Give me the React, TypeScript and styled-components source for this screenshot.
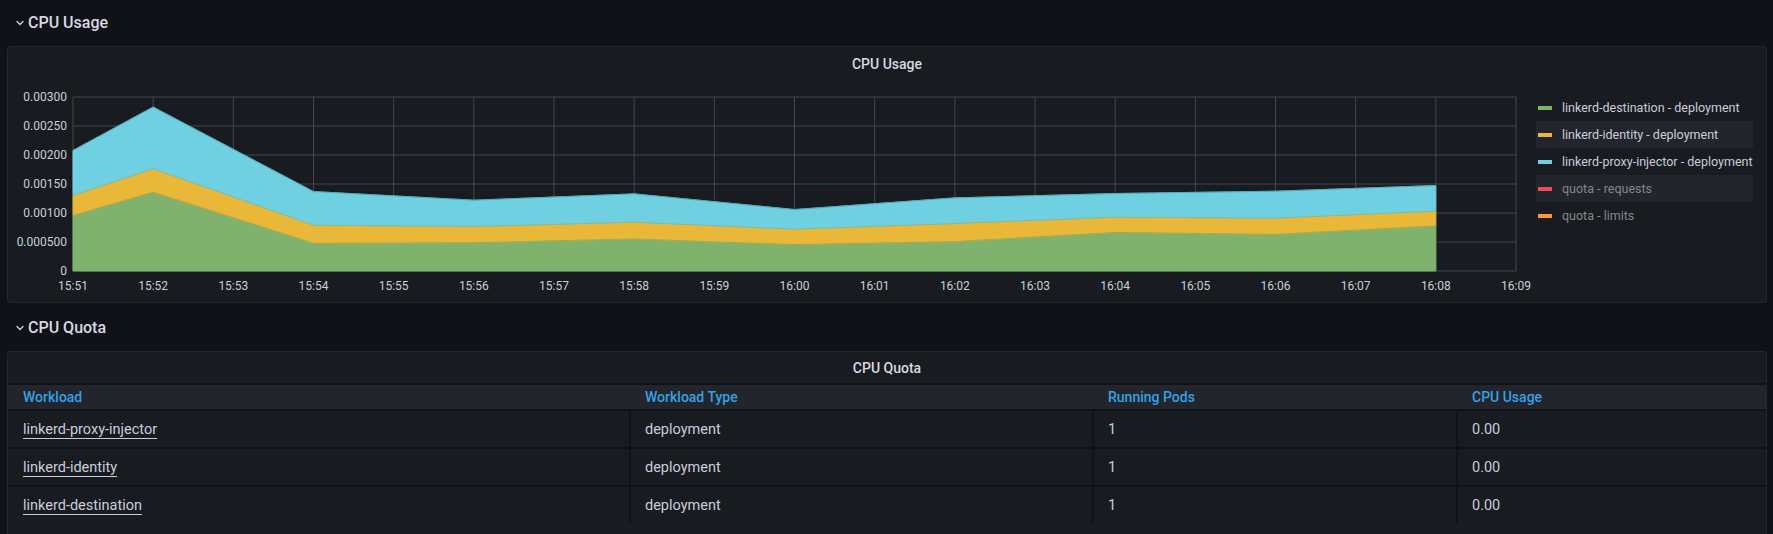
import React from 'react';
import styled, { createGlobalStyle } from 'styled-components';

const GlobalStyle = createGlobalStyle`
    html, body {
        margin: 0;
        padding: 0;
        background: #111217;
        font-family: Roboto, "Liberation Sans", sans-serif;
        color: #ccccdc;
    }
`;

const C = {
    green: '#7eb26d',
    yellow: '#eab839',
    cyan: '#6ed0e0',
    red: '#f2495c',
    orange: '#ff9830',
    grid: '#45474c',
    axis: '#c7d0d9',
};

// chart geometry (svg coords)
const W = 1523;
const H = 223;
const PL = 65;
const PR = 1508;
const PT = 17;
const PB = 191;
const MAX = 0.003;

const xAt = (i: number) => PL + (i * (PR - PL)) / 18;
const yAt = (v: number) => PB - (v / MAX) * (PB - PT);

const idx = [0, 1, 3, 5, 7, 9, 11, 13, 15, 17];
const greenTop = [0.000956, 0.001359, 0.000478, 0.000489, 0.000553, 0.000455, 0.000507, 0.000665, 0.000633, 0.000777];
const yellowTop = [0.001301, 0.001762, 0.000789, 0.000766, 0.000841, 0.00072, 0.000818, 0.000927, 0.00091, 0.001031];
const cyanTop = [0.002079, 0.002827, 0.00137, 0.001221, 0.00133, 0.00106, 0.001261, 0.001336, 0.001376, 0.001474];

const timeLabels = [
    '15:51', '15:52', '15:53', '15:54', '15:55', '15:56', '15:57', '15:58', '15:59', '16:00',
    '16:01', '16:02', '16:03', '16:04', '16:05', '16:06', '16:07', '16:08', '16:09',
];
const yTicks = [
    { v: 0, label: '0' },
    { v: 0.0005, label: '0.000500' },
    { v: 0.001, label: '0.00100' },
    { v: 0.0015, label: '0.00150' },
    { v: 0.002, label: '0.00200' },
    { v: 0.0025, label: '0.00250' },
    { v: 0.003, label: '0.00300' },
];

const line = (vals: number[]) => vals.map((v, i) => `${xAt(idx[i])},${yAt(v)}`);
const band = (top: number[], bottom: number[] | null) => {
    const up = line(top);
    const down = bottom
        ? line(bottom).reverse()
        : [`${xAt(idx[idx.length - 1])},${PB}`, `${xAt(0)},${PB}`];
    return [...up, ...down].join(' ');
};

const legend = [
    { name: 'linkerd-destination - deployment', color: C.green },
    { name: 'linkerd-identity - deployment', color: C.yellow, shaded: true },
    { name: 'linkerd-proxy-injector - deployment', color: C.cyan },
    { name: 'quota - requests', color: C.red, shaded: true, muted: true },
    { name: 'quota - limits', color: C.orange, muted: true },
];

const rows = [
    { workload: 'linkerd-proxy-injector', type: 'deployment', pods: '1', cpu: '0.00' },
    { workload: 'linkerd-identity', type: 'deployment', pods: '1', cpu: '0.00' },
    { workload: 'linkerd-destination', type: 'deployment', pods: '1', cpu: '0.00' },
];

const Chevron = () => (
    <ChevronIcon width="10" height="10" viewBox="0 0 10 10">
        <path d="M2 3.5 L5 6.5 L8 3.5" fill="none" stroke="#ccccdc" strokeWidth="1.4" strokeLinecap="round" strokeLinejoin="round" />
    </ChevronIcon>
);

const UsageChart = () => (
    <svg width={W} height={H} viewBox={`0 0 ${W} ${H}`}>
        {yTicks.map(t => (
            <line key={t.v} x1={PL} x2={PR} y1={yAt(t.v)} y2={yAt(t.v)} stroke={C.grid} strokeWidth="1" />
        ))}
        {timeLabels.map((_, i) => (
            <line key={i} x1={xAt(i)} x2={xAt(i)} y1={PT} y2={PB} stroke={C.grid} strokeWidth="1" />
        ))}
        <polygon points={band(greenTop, null)} fill={C.green} stroke={C.green} strokeWidth="1" />
        <polygon points={band(yellowTop, greenTop)} fill={C.yellow} stroke={C.yellow} strokeWidth="1" />
        <polygon points={band(cyanTop, yellowTop)} fill={C.cyan} stroke={C.cyan} strokeWidth="1" />
        <polyline points={line(greenTop).join(' ')} fill="none" stroke="#8a9a5a" strokeWidth="1" opacity="0.6" />
        <polyline points={line(yellowTop).join(' ')} fill="none" stroke="#a7a860" strokeWidth="1" opacity="0.6" />
        <polyline points={line(cyanTop).join(' ')} fill="none" stroke="#4c8f9a" strokeWidth="1" opacity="0.6" />
        {yTicks.map(t => (
            <AxisText key={t.v} x={PL - 6} y={yAt(t.v)} textAnchor="end" dominantBaseline="central">
                {t.label}
            </AxisText>
        ))}
        {timeLabels.map((l, i) => (
            <AxisText key={l} x={xAt(i)} y={206} textAnchor="middle" dominantBaseline="central">
                {l}
            </AxisText>
        ))}
    </svg>
);

export default function App() {
    return (
        <Page>
            <GlobalStyle />
            <RowHeader>
                <Chevron />
                <RowTitle>CPU Usage</RowTitle>
            </RowHeader>
            <Panel>
                <PanelTitle>CPU Usage</PanelTitle>
                <ChartBody>
                    <UsageChart />
                    <Legend>
                        {legend.map(item => (
                            <LegendItem key={item.name} $shaded={item.shaded} $muted={item.muted}>
                                <Swatch $color={item.color} />
                                {item.name}
                            </LegendItem>
                        ))}
                    </Legend>
                </ChartBody>
            </Panel>

            <RowHeader>
                <Chevron />
                <RowTitle>CPU Quota</RowTitle>
            </RowHeader>
            <Panel $tall>
                <PanelTitle $compact>CPU Quota</PanelTitle>
                <Table>
                    <HeadRow>
                        <HeadCell>Workload</HeadCell>
                        <HeadCell>Workload Type</HeadCell>
                        <HeadCell>Running Pods</HeadCell>
                        <HeadCell>CPU Usage</HeadCell>
                    </HeadRow>
                    {rows.map(r => (
                        <BodyRow key={r.workload}>
                            <Cell>
                                <LinkText>{r.workload}</LinkText>
                            </Cell>
                            <Cell>{r.type}</Cell>
                            <Cell>{r.pods}</Cell>
                            <Cell>{r.cpu}</Cell>
                        </BodyRow>
                    ))}
                </Table>
            </Panel>
        </Page>
    );
}

const Page = styled.div`
    height: 534px;
    overflow: hidden;
    padding: 7px 6px 0 7px;
    box-sizing: border-box;
    display: flex;
    flex-direction: column;
    gap: 9px;
`;

const RowHeader = styled.div`
    height: 30px;
    flex-shrink: 0;
    display: flex;
    align-items: center;
    gap: 3px;
    padding-left: 8px;
`;

const ChevronIcon = styled.svg`
    flex-shrink: 0;
    margin-top: 2px;
`;

const RowTitle = styled.span`
    font-size: 16px;
    font-weight: 500;
    color: #d8d9e2;
`;

const Panel = styled.div<{ $tall?: boolean }>`
    background: #181b1f;
    border: 1px solid #24262b;
    border-radius: 3px;
    box-sizing: border-box;
    height: ${p => (p.$tall ? '240px' : '257px')};
    flex-shrink: 0;
    display: flex;
    flex-direction: column;
    overflow: hidden;
`;

const PanelTitle = styled.div<{ $compact?: boolean }>`
    height: ${p => (p.$compact ? '31px' : '33px')};
    display: flex;
    align-items: center;
    justify-content: center;
    font-size: 14px;
    font-weight: 500;
    color: #d8d9e2;
    flex-shrink: 0;
`;

const ChartBody = styled.div`
    display: flex;
    flex: 1;
`;

const AxisText = styled.text`
    font-family: Roboto, "Liberation Sans", sans-serif;
    font-size: 12px;
    fill: #c7d0d9;
`;

const Legend = styled.div`
    padding: 14px 0 0 5px;
    display: flex;
    flex-direction: column;
`;

const LegendItem = styled.div<{ $shaded?: boolean; $muted?: boolean }>`
    width: 217px;
    height: 27px;
    display: flex;
    align-items: center;
    gap: 10px;
    padding-left: 2px;
    box-sizing: border-box;
    font-size: 12.5px;
    white-space: nowrap;
    color: ${p => (p.$muted ? '#85868c' : '#ccccdc')};
    background: ${p => (p.$shaded ? '#22252b' : 'transparent')};
`;

const Swatch = styled.span<{ $color: string }>`
    width: 14px;
    height: 4px;
    background: ${p => p.$color};
    flex-shrink: 0;
`;

const Table = styled.div`
    display: flex;
    flex-direction: column;
    gap: 2px;
    background: #111217;
    padding-top: 2px;
`;

const HeadRow = styled.div`
    display: grid;
    grid-template-columns: 621px 463px 364px 1fr;
    height: 24px;
    background: #22252b;
`;

const HeadCell = styled.div`
    display: flex;
    align-items: center;
    padding-left: 16px;
    font-size: 14px;
    font-weight: 500;
    color: #33a2e5;
    &:first-child {
        padding-left: 15px;
    }
`;

const BodyRow = styled.div`
    display: grid;
    grid-template-columns: 621px 463px 364px 1fr;
    height: 36px;
`;

const Cell = styled.div`
    display: flex;
    align-items: center;
    padding-left: 14px;
    font-size: 14.5px;
    color: #ccccdc;
    background: #181b1f;
    border-left: 2px solid #111217;
    &:first-child {
        border-left: none;
        padding-left: 15px;
    }
`;

const LinkText = styled.span`
    text-decoration: underline;
    text-underline-offset: 4px;
    text-decoration-thickness: 1px;
`;
